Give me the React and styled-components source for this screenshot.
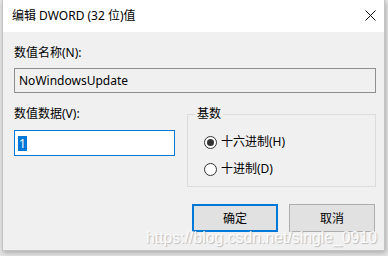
import React from 'react'
import styled, { createGlobalStyle, css } from 'styled-components'

const GlobalStyle = createGlobalStyle`
  html, body {
    margin: 0;
    padding: 0;
    background: #e6e6e6;
  }
  body {
    font-family: 'Noto Sans', 'Noto Sans CJK SC', sans-serif;
    font-size: 12px;
    color: #000;
  }
  * { box-sizing: border-box; }
`

const Page = styled.div`
  position: relative;
  width: 388px;
  height: 256px;
  overflow: hidden;
`

const Window = styled.div`
  margin-left: 2px;
  width: 383px;
  height: 251px;
  background: #f0f0f0;
  border: 1px solid #c4c4c4;
  border-top: none;
  box-shadow: 1px 2px 5px rgba(0, 0, 0, 0.25);
  display: flex;
  flex-direction: column;
`

const TitleBar = styled.div`
  height: 32px;
  background: #fff;
  display: flex;
  align-items: center;
  justify-content: space-between;
  padding: 0 8px 1px 9px;
  font-size: 12px;
  line-height: 16px;
`

const Body = styled.div`
  padding: 13px 8px 0 11px;
  display: flex;
  flex-direction: column;
`

const Label = styled.div`
  font-size: 12px;
  line-height: 16px;
  height: 16px;
  white-space: nowrap;
`

const field = css`
  display: flex;
  align-items: center;
  padding-left: 4px;
  font-size: 12px;
  line-height: 16px;
  border: 1px solid;
`

const NameField = styled.div`
  ${field};
  margin-top: 7px;
  height: 25px;
  background: #f0f0f0;
  border-color: #8f8f8f;
`

const ValueRow = styled.div`
  margin-top: 13px;
  display: grid;
  grid-template-columns: 161px 1fr;
  column-gap: 12px;
`

const ValueField = styled.div`
  ${field};
  margin-top: 8px;
  height: 26px;
  padding-left: 3px;
  background: #fff;
  border-color: #0078d7;
`

const Selected = styled.span`
  display: inline-block;
  width: 9px;
  height: 15px;
  line-height: 15px;
  background: #0078d7;
  color: #fff;
  padding-left: 1px;
`

const GroupBox = styled.fieldset`
  margin: 0;
  min-width: 0;
  padding: 12px 0 9px 16px;
  border: 1px solid #dcdcdc;
`

const Legend = styled.legend`
  margin-left: -9px;
  padding: 0 2px;
  font-size: 12px;
  line-height: 16px;
`

const RadioRow = styled.label`
  display: flex;
  align-items: center;
  gap: 4px;
  height: 16px;
  line-height: 16px;
  margin-top: ${p => (p.$first ? '0' : '11px')};
`

const RadioDot = styled.span`
  width: 13px;
  height: 13px;
  border-radius: 50%;
  border: 1px solid #333;
  background: #fff;
  display: flex;
  align-items: center;
  justify-content: center;
  &::after {
    content: '';
    width: 7px;
    height: 7px;
    border-radius: 50%;
    background: ${p => (p.$checked ? '#333' : 'transparent')};
  }
`

const ButtonRow = styled.div`
  margin-top: 17px;
  display: flex;
  justify-content: flex-end;
  gap: 11px;
  padding-right: 1px;
`

const Button = styled.button`
  width: 86px;
  height: 28px;
  background: #e1e1e1;
  border: ${p => (p.$primary ? '2px solid #0078d7' : '1px solid #adadad')};
  font-family: inherit;
  font-size: 12px;
  color: #000;
  padding: 0;
`

const Watermark = styled.div`
  position: absolute;
  left: 146px;
  top: 229px;
  font-family: 'Liberation Sans', Arial, sans-serif;
  font-size: 15.8px;
  line-height: 18px;
  color: rgba(255, 255, 255, 0.92);
  text-shadow: 1px 1px 1px rgba(0, 0, 0, 0.22);
  white-space: nowrap;
`

const CloseIcon = () => (
  <svg width="11" height="11" viewBox="0 0 11 11">
    <path d="M0.5 0.5 L10.5 10.5 M10.5 0.5 L0.5 10.5" stroke="#111" strokeWidth="1" />
  </svg>
)

const Radio = ({ checked, first, children }) => (
  <RadioRow $first={first}>
    <RadioDot $checked={checked} />
    {children}
  </RadioRow>
)

export default function App() {
  return (
    <Page>
      <GlobalStyle />
      <Window>
        <TitleBar>
          <span>编辑 DWORD (32 位)值</span>
          <CloseIcon />
        </TitleBar>
        <Body>
          <Label>数值名称(N):</Label>
          <NameField>NoWindowsUpdate</NameField>
          <ValueRow>
            <div>
              <Label>数值数据(V):</Label>
              <ValueField>
                <Selected>1</Selected>
              </ValueField>
            </div>
            <GroupBox>
              <Legend>基数</Legend>
              <Radio checked first>十六进制(H)</Radio>
              <Radio>十进制(D)</Radio>
            </GroupBox>
          </ValueRow>
          <ButtonRow>
            <Button $primary>确定</Button>
            <Button>取消</Button>
          </ButtonRow>
        </Body>
      </Window>
      <Watermark>https://blog.csdn.net/single_0910</Watermark>
    </Page>
  )
}
